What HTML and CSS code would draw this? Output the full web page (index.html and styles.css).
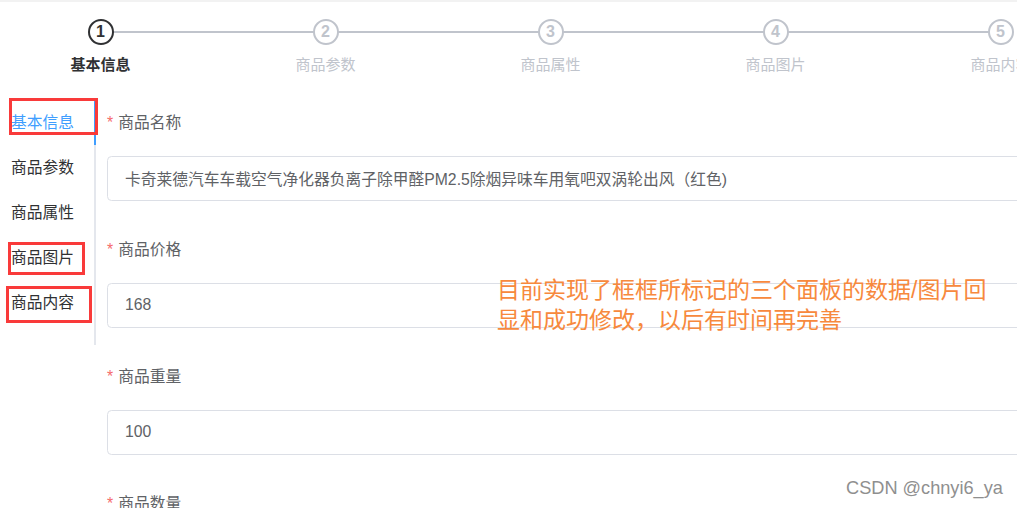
FILE: index.html
```html
<!DOCTYPE html>
<html lang="zh-CN">
  <head>
    <meta charset="UTF-8" />
    <meta name="viewport" content="width=device-width, initial-scale=1.0" />
    <title>编辑商品</title>
    <link rel="stylesheet" href="styles.css">
  </head>
  <body>
    <div class="topbar"></div>

    <!-- 步骤条 -->
    <div class="steps">
      <div class="step active">
        <div class="step-head"><span class="step-icon">1</span></div>
        <div class="step-title">基本信息</div>
      </div>
      <div class="step">
        <div class="step-head"><span class="step-icon">2</span></div>
        <div class="step-title">商品参数</div>
      </div>
      <div class="step">
        <div class="step-head"><span class="step-icon">3</span></div>
        <div class="step-title">商品属性</div>
      </div>
      <div class="step">
        <div class="step-head"><span class="step-icon">4</span></div>
        <div class="step-title">商品图片</div>
      </div>
      <div class="step last">
        <div class="step-head"><span class="step-icon">5</span></div>
        <div class="step-title">商品内容</div>
      </div>
    </div>

    <div class="main">
      <!-- 左侧标签页 -->
      <div class="tabs">
        <div class="tab active">基本信息</div>
        <div class="tab">商品参数</div>
        <div class="tab">商品属性</div>
        <div class="tab">商品图片</div>
        <div class="tab">商品内容</div>
        <span class="mark mark-1"></span>
        <span class="mark mark-2"></span>
        <span class="mark mark-3"></span>
      </div>

      <!-- 基本信息表单 -->
      <form class="form" action="">
        <div class="form-item">
          <label for="goodsName"><i>*</i>商品名称</label>
          <input type="text" id="goodsName" value="卡奇莱德汽车车载空气净化器负离子除甲醛PM2.5除烟异味车用氧吧双涡轮出风（红色)" />
        </div>
        <div class="form-item">
          <label for="goodsPrice"><i>*</i>商品价格</label>
          <input type="text" id="goodsPrice" value="168" />
        </div>
        <div class="form-item">
          <label for="goodsWeight"><i>*</i>商品重量</label>
          <input type="text" id="goodsWeight" value="100" />
        </div>
        <div class="form-item">
          <label for="goodsNumber"><i>*</i>商品数量</label>
          <input type="text" id="goodsNumber" value="50" />
        </div>
      </form>
    </div>

    <p class="note">目前实现了框框所标记的三个面板的数据/图片回<br />显和成功修改，以后有时间再完善</p>
    <span class="watermark">CSDN @chnyi6_ya</span>
  </body>
</html>
```

FILE: styles.css
```css
* {
  box-sizing: border-box;
}
body {
  margin: 0;
  width: 1017px;
  height: 508px;
  overflow: hidden;
  position: relative;
  background: #fff;
  font-family: "Liberation Sans", "Noto Sans CJK SC", sans-serif;
}
.topbar {
  height: 2px;
  background: #f2f2f2;
}

/* 步骤条 */
.steps {
  display: flex;
  width: 1125px;
  margin-left: -12px;
  padding-top: 17px;
}
.step {
  width: 225px;
  text-align: center;
}
.step-head {
  position: relative;
  display: flex;
  justify-content: center;
}
.step-head::after {
  content: "";
  position: absolute;
  left: 50%;
  right: -50%;
  top: 12px;
  height: 2px;
  background: #c0c4cc;
}
.step.last .step-head::after {
  display: none;
}
.step-icon {
  position: relative;
  z-index: 1;
  width: 26px;
  height: 26px;
  line-height: 22px;
  border: 2px solid #c0c4cc;
  border-radius: 50%;
  background: #fff;
  color: #c0c4cc;
  font-size: 16px;
  font-weight: bold;
}
.step-title {
  margin-top: 10px;
  line-height: 20px;
  font-size: 15px;
  color: #c0c4cc;
}
.step.active .step-icon {
  border-color: #303133;
  color: #303133;
}
.step.active .step-title {
  color: #303133;
  font-weight: bold;
}

/* 主体 */
.main {
  display: flex;
  margin-top: 25px;
}
.tabs {
  position: relative;
  flex: none;
  width: 96px;
  padding-bottom: 20px;
  border-right: 2px solid #e4e7ed;
  align-self: flex-start;
}
.tab {
  height: 45px;
  line-height: 45px;
  padding-left: 11px;
  font-size: 15.75px;
  color: #303133;
}
.tab.active {
  color: #409eff;
  box-shadow: 2px 0 0 #409eff;
}
.mark {
  position: absolute;
  border: 3px solid #f93a3a;
}
.mark-1 {
  left: 9px;
  top: -2px;
  width: 89px;
  height: 37px;
}
.mark-2 {
  left: 8px;
  top: 142px;
  width: 77px;
  height: 33px;
}
.mark-3 {
  left: 6px;
  top: 186px;
  width: 86px;
  height: 37px;
}

/* 表单 */
.form {
  flex: none;
  width: 1000px;
  margin-left: 11px;
}
.form-item {
  margin-bottom: 26.5px;
}
.form-item label {
  display: block;
  height: 55.5px;
  line-height: 45px;
  padding-bottom: 10.5px;
  font-size: 15.75px;
  color: #606266;
}
.form-item label i {
  font-style: normal;
  color: #f56c6c;
  margin-right: 5px;
}
.form-item input {
  display: block;
  width: 100%;
  height: 45px;
  padding: 0 17px;
  border: 1px solid #dcdfe6;
  border-radius: 4.5px;
  font-family: inherit;
  font-size: 15.75px;
  color: #606266;
  outline: none;
}

/* 截图标注 */
.note {
  position: absolute;
  left: 497px;
  top: 275px;
  margin: 0;
  font-size: 23px;
  line-height: 30px;
  color: #f7893d;
}
.watermark {
  position: absolute;
  left: 846px;
  top: 477px;
  font-size: 18.2px;
  line-height: 22px;
  color: #8f8f8f;
}
```
